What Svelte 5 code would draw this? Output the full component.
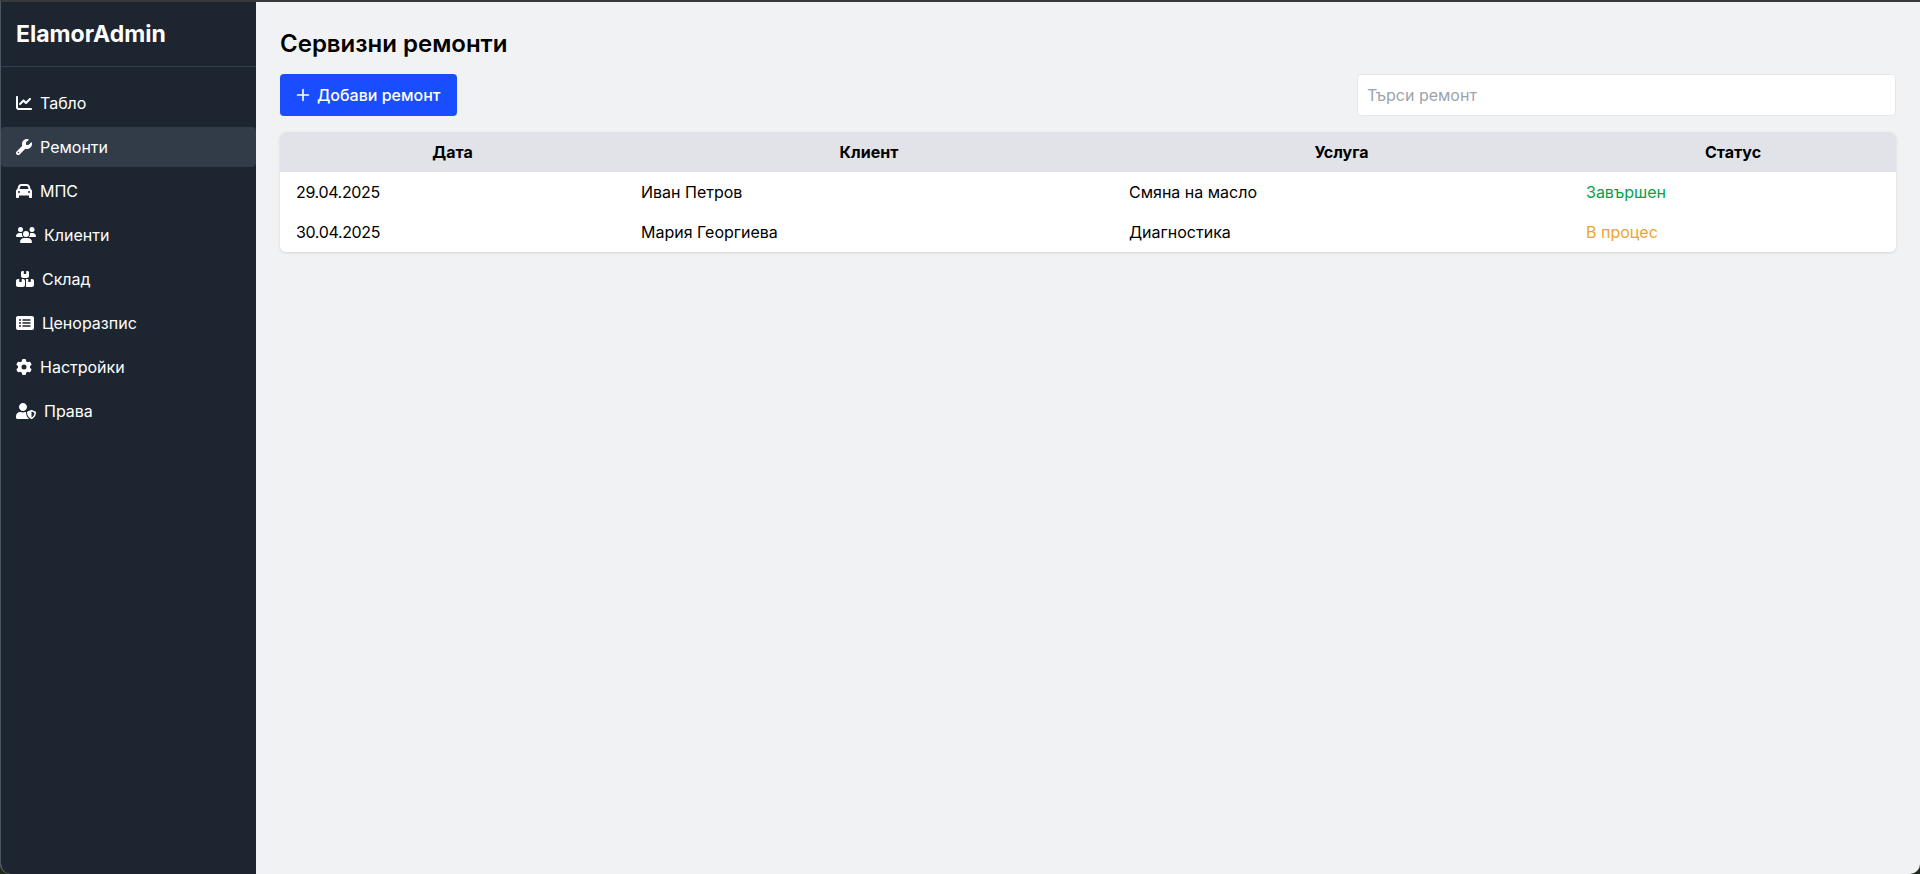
<script lang="ts">
	const navItems = [
		{
			label: 'Табло',
			vb: '0 0 512 512',
			w: 16,
			d: 'M64 64c0-17.7-14.3-32-32-32S0 46.3 0 64V400c0 44.2 35.8 80 80 80H480c17.7 0 32-14.3 32-32s-14.3-32-32-32H80c-8.8 0-16-7.2-16-16V64zm406.6 86.6c12.5-12.5 12.5-32.8 0-45.3s-32.8-12.5-45.3 0L320 210.7l-57.4-57.4c-12.5-12.5-32.8-12.5-45.3 0l-112 112c-12.5 12.5-12.5 32.8 0 45.3s32.8 12.5 45.3 0L240 221.3l57.4 57.4c12.5 12.5 32.8 12.5 45.3 0l128-128z'
		},
		{
			label: 'Ремонти',
			active: true,
			vb: '0 0 512 512',
			w: 16,
			d: 'M352 320c88.4 0 160-71.6 160-160c0-15.3-2.2-30.1-6.2-44.2c-3.1-10.8-16.4-13.2-24.3-5.3l-76.8 76.8c-3 3-7.1 4.7-11.3 4.7H336c-8.8 0-16-7.2-16-16V118.6c0-4.2 1.7-8.3 4.7-11.3l76.8-76.8c7.9-7.9 5.4-21.2-5.3-24.3C382.1 2.2 367.3 0 352 0C263.6 0 192 71.6 192 160c0 19.1 3.4 37.5 9.5 54.5L19.9 396.1C7.2 408.8 0 426.1 0 444.1C0 481.6 30.4 512 67.9 512c18 0 35.3-7.2 48-19.9L297.5 310.5c17 6.2 35.4 9.5 54.5 9.5zM80 408a24 24 0 1 1 0 48 24 24 0 1 1 0-48z'
		},
		{
			label: 'МПС',
			vb: '0 0 512 512',
			w: 16,
			d: 'M135.2 117.4L109.1 192H402.9l-26.1-74.6C372.3 104.6 360.2 96 346.6 96H165.4c-13.6 0-25.7 8.6-30.2 21.4zM39.6 196.8L74.8 96.3C88.3 57.8 124.6 32 165.4 32H346.6c40.8 0 77.1 25.8 90.6 64.3l35.2 100.5c23.2 9.6 39.6 32.5 39.6 59.2V400v48c0 17.7-14.3 32-32 32H448c-17.7 0-32-14.3-32-32V400H96v48c0 17.7-14.3 32-32 32H32c-17.7 0-32-14.3-32-32V400 256c0-26.7 16.4-49.6 39.6-59.2zM128 288a32 32 0 1 0 -64 0 32 32 0 1 0 64 0zm288 32a32 32 0 1 0 0-64 32 32 0 1 0 0 64z'
		},
		{
			label: 'Клиенти',
			vb: '0 0 640 512',
			w: 20,
			d: 'M144 0a80 80 0 1 1 0 160A80 80 0 1 1 144 0zM512 0a80 80 0 1 1 0 160A80 80 0 1 1 512 0zM0 298.7C0 239.8 47.8 192 106.7 192h42.7c15.9 0 31 3.5 44.6 9.7c-1.3 7.2-1.9 14.7-1.9 22.3c0 38.2 16.8 72.5 43.3 96c-.2 0-.4 0-.7 0H21.3C9.6 320 0 310.4 0 298.7zM405.3 320c-.2 0-.4 0-.7 0c26.6-23.5 43.3-57.8 43.3-96c0-7.6-.7-15-1.9-22.3c13.6-6.3 28.7-9.7 44.6-9.7h42.7C592.2 192 640 239.8 640 298.7c0 11.8-9.6 21.3-21.3 21.3H405.3zM224 224a96 96 0 1 1 192 0 96 96 0 1 1 -192 0zM128 485.3C128 411.7 187.7 352 261.3 352H378.7C452.3 352 512 411.7 512 485.3c0 14.7-11.9 26.7-26.7 26.7H154.7c-14.7 0-26.7-11.9-26.7-26.7z'
		},
		{
			label: 'Склад',
			vb: '0 0 576 512',
			w: 18,
			d: 'M248 0H208c-26.5 0-48 21.5-48 48V160c0 35.3 28.7 64 64 64H352c35.3 0 64-28.7 64-64V48c0-26.5-21.5-48-48-48H328V80c0 8.8-7.2 16-16 16H264c-8.8 0-16-7.2-16-16V0zM64 256c-35.3 0-64 28.7-64 64V448c0 35.3 28.7 64 64 64H224c35.3 0 64-28.7 64-64V320c0-35.3-28.7-64-64-64H184v80c0 8.8-7.2 16-16 16H120c-8.8 0-16-7.2-16-16V256H64zM352 512H512c35.3 0 64-28.7 64-64V320c0-35.3-28.7-64-64-64H472v80c0 8.8-7.2 16-16 16H408c-8.8 0-16-7.2-16-16V256H352c-15 0-28.8 5.1-39.7 13.8c4.9 10.4 7.7 22 7.7 34.2V464c0 12.2-2.8 23.8-7.7 34.2C323.2 506.9 337 512 352 512z'
		},
		{
			label: 'Ценоразпис',
			vb: '0 0 576 512',
			w: 18,
			d: 'M0 96C0 60.7 28.7 32 64 32H512c35.3 0 64 28.7 64 64V416c0 35.3-28.7 64-64 64H64c-35.3 0-64-28.7-64-64V96zM128 288a32 32 0 1 0 0-64 32 32 0 1 0 0 64zm32-128a32 32 0 1 0 -64 0 32 32 0 1 0 64 0zM128 384a32 32 0 1 0 0-64 32 32 0 1 0 0 64zm96-248c-13.3 0-24 10.7-24 24s10.7 24 24 24H448c13.3 0 24-10.7 24-24s-10.7-24-24-24H224zm0 96c-13.3 0-24 10.7-24 24s10.7 24 24 24H448c13.3 0 24-10.7 24-24s-10.7-24-24-24H224zm0 96c-13.3 0-24 10.7-24 24s10.7 24 24 24H448c13.3 0 24-10.7 24-24s-10.7-24-24-24H224z'
		},
		{
			label: 'Настройки',
			vb: '0 0 512 512',
			w: 16,
			d: 'M495.9 166.6c3.2 8.7 .5 18.4-6.4 24.6l-43.3 39.4c1.1 8.3 1.7 16.8 1.7 25.4s-.6 17.1-1.7 25.4l43.3 39.4c6.9 6.2 9.6 15.9 6.4 24.6c-4.4 11.9-9.7 23.3-15.8 34.3l-4.7 8.1c-6.6 11-14 21.4-22.1 31.2c-5.9 7.2-15.7 9.6-24.5 6.8l-55.7-17.7c-13.4 10.3-28.2 18.9-44 25.4l-12.5 57.1c-2 9.1-9 16.3-18.2 17.8c-13.8 2.3-28 3.5-42.5 3.5s-28.7-1.2-42.5-3.5c-9.2-1.5-16.2-8.7-18.2-17.8l-12.5-57.1c-15.8-6.5-30.6-15.1-44-25.4L83.1 425.9c-8.8 2.8-18.6 .3-24.5-6.8c-8.1-9.8-15.5-20.2-22.1-31.2l-4.7-8.1c-6.1-11-11.4-22.4-15.8-34.3c-3.2-8.7-.5-18.4 6.4-24.6l43.3-39.4C64.6 273.1 64 264.6 64 256s.6-17.1 1.7-25.4L22.4 191.2c-6.9-6.2-9.6-15.9-6.4-24.6c4.4-11.9 9.7-23.3 15.8-34.3l4.7-8.1c6.6-11 14-21.4 22.1-31.2c5.9-7.2 15.7-9.6 24.5-6.8l55.7 17.7c13.4-10.3 28.2-18.9 44-25.4l12.5-57.1c2-9.1 9-16.3 18.2-17.8C227.3 1.2 241.5 0 256 0s28.7 1.2 42.5 3.5c9.2 1.5 16.2 8.7 18.2 17.8l12.5 57.1c15.8 6.5 30.6 15.1 44 25.4l55.7-17.7c8.8-2.8 18.6-.3 24.5 6.8c8.1 9.8 15.5 20.2 22.1 31.2l4.7 8.1c6.1 11 11.4 22.4 15.8 34.3zM256 336a80 80 0 1 0 0-160 80 80 0 1 0 0 160z'
		},
		{
			label: 'Права',
			vb: '0 0 640 512',
			w: 20,
			d: 'M622.3 271.1l-115.2-45c-4.1-1.6-12.6-3.7-22.2 0l-115.2 45c-10.7 4.2-17.7 14-17.7 24.9 0 111.6 68.7 188.8 132.9 213.9 9.6 3.7 18 1.6 22.2 0C558.4 489.9 640 420.5 640 296c0-10.9-7-20.7-17.7-24.9zM496 462.4V273.3l95.5 37.3c-5.6 87.1-60.9 135.4-95.5 151.8zM224 256c70.7 0 128-57.3 128-128S294.7 0 224 0 96 57.3 96 128s57.3 128 128 128zm96 40c0-2.5.8-4.7 1.1-7.2-2.5-.1-4.9-.8-7.5-.8h-16.7c-22.2 10.2-46.9 16-72.9 16s-50.6-5.8-72.9-16h-16.7C60.2 288 0 348.2 0 422.4V464c0 26.5 21.5 48 48 48h352c6.8 0 13.3-1.5 19.2-4-54-42.9-99.2-116.7-99.2-212z'
		}
	];

	const repairs = [
		{ date: '29.04.2025', client: 'Иван Петров', service: 'Смяна на масло', status: 'Завършен', tone: 'done' },
		{ date: '30.04.2025', client: 'Мария Георгиева', service: 'Диагностика', status: 'В процес', tone: 'progress' }
	];
</script>

<div class="frame" lang="bg">
	<aside class="sidebar">
		<div class="brand">ElamorAdmin</div>
		<nav class="nav">
			{#each navItems as item}
				<a class="nav__item" class:nav__item--active={item.active} href="#top">
					<svg class="nav__icon" width={item.w} height="16" viewBox={item.vb} aria-hidden="true">
						<path fill="currentColor" d={item.d} />
					</svg>
					<span>{item.label}</span>
				</a>
			{/each}
		</nav>
	</aside>

	<main class="content">
		<h1 class="title">Сервизни ремонти</h1>
		<div class="toolbar">
			<button class="add-btn" type="button">
				<svg width="14" height="16" viewBox="0 0 14 16" aria-hidden="true">
					<path d="M7 2.500v11M1.500 8h11" fill="none" stroke="currentColor" stroke-width="1.600" stroke-linecap="round" />
				</svg>
				Добави ремонт
			</button>
			<input class="search" type="text" placeholder="Търси ремонт" />
		</div>

		<div class="table-card">
			<table class="table">
				<colgroup>
					<col class="col-date" />
					<col class="col-client" />
					<col class="col-service" />
					<col />
				</colgroup>
				<thead>
					<tr>
						<th>Дата</th>
						<th>Клиент</th>
						<th>Услуга</th>
						<th>Статус</th>
					</tr>
				</thead>
				<tbody>
					{#each repairs as row}
						<tr>
							<td class="date">{row.date}</td>
							<td>{row.client}</td>
							<td>{row.service}</td>
							<td class="status--{row.tone}">{row.status}</td>
						</tr>
					{/each}
				</tbody>
			</table>
		</div>
	</main>
</div>

<style>
	:global(html),
	:global(body) {
		margin: 0;
		background: #1e2a20;
	}

	.frame {
		height: 874px;
		box-sizing: border-box;
		display: flex;
		overflow: hidden;
		border-top: 2px solid #3a3a3a;
		border-left: 1px solid #4b5563;
		border-radius: 0 0 10px 10px;
		font-family: Inter, 'Liberation Sans', sans-serif;
		font-size: 14px;
		color: #000;
		background: #f1f2f4;
	}

	.sidebar {
		width: 255px;
		flex: none;
		background: #1d2530;
		color: #fff;
	}

	.brand {
		height: 65px;
		box-sizing: border-box;
		padding: 0 15px;
		display: flex;
		align-items: center;
		font-size: 23px;
		font-weight: 700;
		line-height: 1;
		border-bottom: 1px solid #343f4b;
	}

	.nav {
		display: flex;
		flex-direction: column;
		gap: 4px;
		padding-top: 16px;
	}

	.nav__item {
		height: 40px;
		display: flex;
		align-items: center;
		gap: 8px;
		padding: 0 15px;
		border-radius: 4px;
		color: #fff;
		font-size: 16px;
		text-decoration: none;
	}

	.nav__item--active {
		background: #323c49;
	}

	.nav__icon {
		flex: none;
	}

	.content {
		flex: 1;
		min-width: 0;
		padding: 24px;
	}

	.title {
		margin: 2px 0 14px;
		font-size: 24px;
		line-height: 32px;
		font-weight: 600;
	}

	.toolbar {
		display: flex;
		justify-content: space-between;
		align-items: center;
		margin-bottom: 16px;
	}

	.add-btn {
		height: 42px;
		display: flex;
		align-items: center;
		gap: 7px;
		padding: 0 16px;
		border: 0;
		border-radius: 4px;
		background: #1a4dff;
		color: #fff;
		font: inherit;
		font-size: 16px;
		font-weight: 500;
	}

	.search {
		width: 539px;
		height: 42px;
		box-sizing: border-box;
		padding: 0 9px;
		border: 1px solid #e5e7eb;
		border-radius: 4px;
		background: #fff;
		font: inherit;
		font-size: 16px;
	}

	.search::placeholder {
		color: #9ca3af;
	}

	.table-card {
		border-radius: 6px;
		overflow: hidden;
		background: #fff;
		box-shadow: 0 1px 3px rgba(0, 0, 0, 0.12);
	}

	.table {
		width: 100%;
		table-layout: fixed;
		border-collapse: collapse;
		font-size: 16px;
	}

	.col-date {
		width: 345px;
	}

	.col-client {
		width: 488px;
	}

	.col-service {
		width: 457px;
	}

	.table th {
		height: 40px;
		padding: 0 16px;
		background: #e1e3e8;
		font-weight: 700;
		text-align: center;
	}

	.table td {
		height: 40px;
		padding: 0 16px;
	}

	.date {
		letter-spacing: -0.35px;
	}

	.status--done {
		color: #00a34a;
	}

	.status--progress {
		color: #eaa62c;
	}
</style>
